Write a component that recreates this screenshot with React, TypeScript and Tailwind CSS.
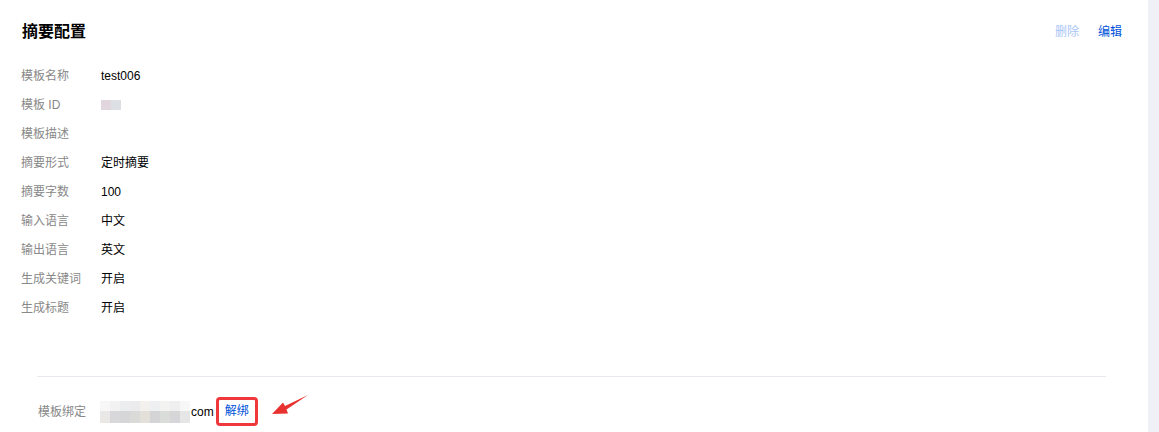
import React from "react";

const rows: [string, React.ReactNode][] = [
  ["模板名称", "test006"],
  [
    "模板 ID",
    <span className="flex h-[10px] mt-[1px]">
      <span className="w-[10px] bg-[#e1d6dd]" />
      <span className="w-[10px] bg-[#dcdfe4]" />
    </span>,
  ],
  ["模板描述", ""],
  ["摘要形式", "定时摘要"],
  ["摘要字数", "100"],
  ["输入语言", "中文"],
  ["输出语言", "英文"],
  ["生成关键词", "开启"],
  ["生成标题", "开启"],
];

const blurTop = ["#f7f7f8", "#f2f2f3", "#ecedee", "#ebebed", "#f3f1ee", "#eeeff1", "#f3f3f2", "#efeff0", "#f7f7f7"];
const blurBottom = ["#e9e8e6", "#d8d8da", "#d6d6d8", "#dadbd9", "#e3dfd9", "#d4d4d6", "#dadcd9", "#d6d6d9", "#e6e6e7"];

const BlurBox = () => (
  <span className="flex flex-col w-[90px] h-[22px]">
    <span className="flex h-[10px]">
      {blurTop.map((c, i) => (
        <span key={i} className="w-[10px] h-full" style={{ background: c }} />
      ))}
    </span>
    <span className="flex h-[12px]">
      {blurBottom.map((c, i) => (
        <span key={i} className="w-[10px] h-full" style={{ background: c }} />
      ))}
    </span>
  </span>
);

export default function App() {
  return (
    <div className="flex w-[1159px] h-[432px] bg-white font-['Liberation_Sans','Noto_Sans_CJK_SC',sans-serif] text-[12px] overflow-hidden">
      <div className="flex-1 flex flex-col">
        <div className="flex items-center justify-between pl-[22px] pr-[26px] pt-[21px] h-[43px]">
          <h1 className="text-[16px] font-bold text-[#000] leading-[22px]">摘要配置</h1>
          <div className="flex gap-[19px] text-[12px]">
            <span className="text-[#a9c5f5]">删除</span>
            <span className="text-[#0052d9]">编辑</span>
          </div>
        </div>
        <div className="flex flex-col pl-[21px] pt-[18px]">
          {rows.map(([label, value]) => (
            <div key={label} className="flex items-center h-[29px]">
              <span className="w-[80px] text-[#888]">{label}</span>
              <span className="text-[#000]">{value}</span>
            </div>
          ))}
        </div>
        <div className="mt-[54px] mx-[37px] mr-[42px] border-t border-[#e7e8ee]" />
        <div className="flex items-center pl-[38px] pt-[20px]">
          <span className="w-[62px] text-[#888]">模板绑定</span>
          <BlurBox />
          <span className="text-[#000] ml-[1px]">com</span>
          <span className="ml-[2px] px-[6px] py-[5px] border-[3px] border-[#f0383c] rounded-[4px] text-[#0052d9] leading-[13px]">
            解绑
          </span>
          <svg className="ml-[12px] mt-[-14px]" width="40" height="24" viewBox="0 0 40 24">
            <path d="M38 2 L15 13 L13 9.5 L2 21 L18 20.5 L16.5 16.5 Z" fill="#e8322f" />
          </svg>
        </div>
      </div>
      <div className="w-[11px] h-full bg-[#f0f1f6]" />
    </div>
  );
}
